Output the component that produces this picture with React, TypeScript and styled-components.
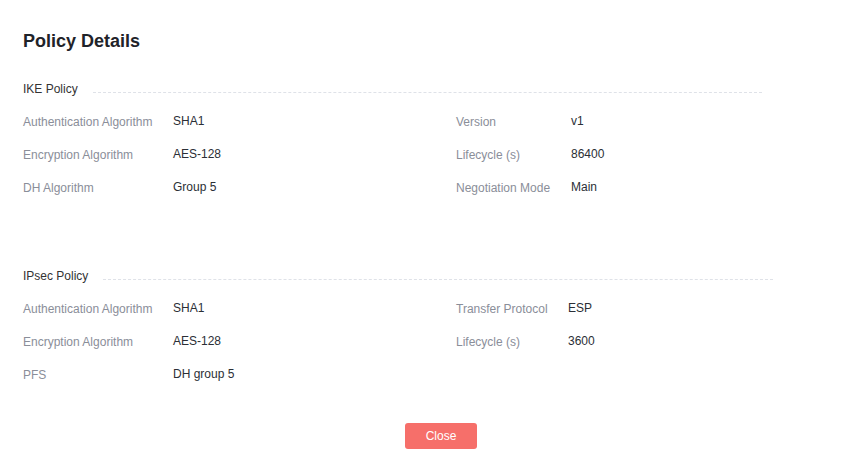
import React from "react";
import styled, { createGlobalStyle } from "styled-components";

const Global = createGlobalStyle`
  html, body { margin: 0; padding: 0; background: #fff; }
  body { font-family: "Liberation Sans", Arial, sans-serif; }
`;

const Page = styled.div`
  width: 854px;
  height: 472px;
  box-sizing: border-box;
  padding: 29px 23px 0 23px;
  display: flex;
  flex-direction: column;
  background: #fff;
`;

const Title = styled.h1`
  margin: 0;
  font-size: 18px;
  line-height: 24px;
  font-weight: 700;
  color: #1f2329;
`;

const Section = styled.section<{ $top: number }>`
  margin-top: ${(p) => p.$top}px;
  display: flex;
  flex-direction: column;
`;

const SectionHeader = styled.div`
  display: flex;
  align-items: flex-start;
  height: 20px;
  margin-bottom: 5px;
`;

const SectionTitle = styled.span`
  font-size: 12px;
  line-height: 20px;
  color: #333;
  white-space: nowrap;
`;

const DashLine = styled.span<{ $width: number }>`
  display: block;
  width: ${(p) => p.$width}px;
  margin-left: 15px;
  margin-top: 13px;
  border-top: 1px dashed #dfe2e8;
`;

const Grid = styled.div`
  display: grid;
  grid-template-columns: 433px 1fr;
  grid-auto-rows: 33px;
`;

const Item = styled.div`
  display: flex;
  align-items: flex-start;
  padding-top: 6px;
`;

const Label = styled.span<{ $w: number }>`
  width: ${(p) => p.$w}px;
  flex: none;
  font-size: 12px;
  line-height: 20px;
  padding-top: 2px;
  color: #8a8e99;
`;

const Value = styled.span`
  font-size: 12px;
  line-height: 20px;
  padding-top: 1px;
  color: #2b2f36;
`;

const Footer = styled.div`
  display: flex;
  justify-content: center;
  margin-top: 33px;
  padding-left: 28px;
`;

const CloseButton = styled.button`
  width: 72px;
  height: 26px;
  border: none;
  border-radius: 3px;
  background: #f66f6a;
  color: #fff;
  font-family: "Liberation Sans", Arial, sans-serif;
  font-size: 12px;
  cursor: pointer;
  padding: 0;
`;

type Pair = [string, string];

const PolicySection = ({
  title,
  lineWidth,
  top,
  left,
  right,
  rightLabelWidth,
}: {
  title: string;
  lineWidth: number;
  top: number;
  left: Pair[];
  right: Pair[];
  rightLabelWidth: number;
}) => {
  const rows = Math.max(left.length, right.length);
  const cells: React.ReactNode[] = [];
  for (let i = 0; i < rows; i++) {
    const l = left[i];
    const r = right[i];
    cells.push(
      <Item key={`l${i}`}>
        {l && (
          <>
            <Label $w={150}>{l[0]}</Label>
            <Value>{l[1]}</Value>
          </>
        )}
      </Item>
    );
    cells.push(
      <Item key={`r${i}`}>
        {r && (
          <>
            <Label $w={rightLabelWidth}>{r[0]}</Label>
            <Value>{r[1]}</Value>
          </>
        )}
      </Item>
    );
  }
  return (
    <Section $top={top}>
      <SectionHeader>
        <SectionTitle>{title}</SectionTitle>
        <DashLine $width={lineWidth} />
      </SectionHeader>
      <Grid>{cells}</Grid>
    </Section>
  );
};

export default function App() {
  return (
    <>
      <Global />
      <Page>
        <Title>Policy Details</Title>
        <PolicySection
          title="IKE Policy"
          lineWidth={669}
          top={26}
          rightLabelWidth={115}
          left={[
            ["Authentication Algorithm", "SHA1"],
            ["Encryption Algorithm", "AES-128"],
            ["DH Algorithm", "Group 5"],
          ]}
          right={[
            ["Version", "v1"],
            ["Lifecycle (s)", "86400"],
            ["Negotiation Mode", "Main"],
          ]}
        />
        <PolicySection
          title="IPsec Policy"
          lineWidth={670}
          top={63}
          rightLabelWidth={112}
          left={[
            ["Authentication Algorithm", "SHA1"],
            ["Encryption Algorithm", "AES-128"],
            ["PFS", "DH group 5"],
          ]}
          right={[
            ["Transfer Protocol", "ESP"],
            ["Lifecycle (s)", "3600"],
          ]}
        />
        <Footer>
          <CloseButton>Close</CloseButton>
        </Footer>
      </Page>
    </>
  );
}
